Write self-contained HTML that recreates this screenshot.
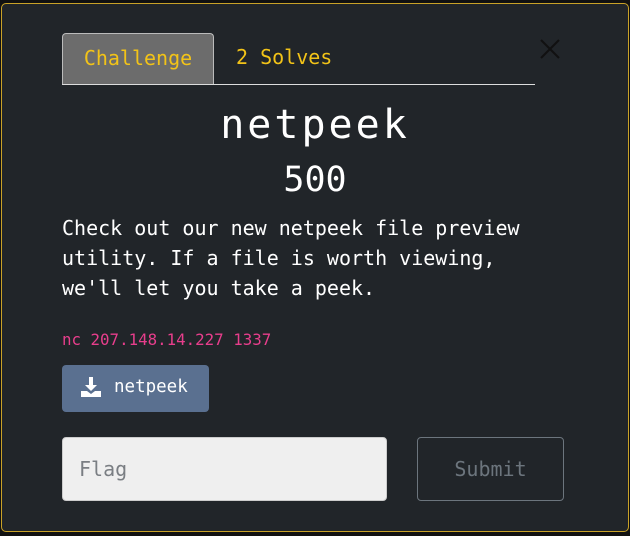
<!DOCTYPE html>
<html><head><style>
*{box-sizing:border-box;margin:0;padding:0}
body{width:630px;height:536px;background:#111;position:relative;overflow:hidden;font-family:"DejaVu Sans Mono","Liberation Mono",monospace}
.m{position:absolute;left:1px;top:3px;width:628px;height:529px;background:#212529;border:1px solid #c9a227;border-radius:5px}
.tab{position:absolute;left:62px;top:33px;width:152px;height:51px;background:#6c6c6c;border:1px solid #bbb;border-bottom:none;border-radius:4px 4px 0 0;color:#f2c318;font-size:20px;text-align:center;line-height:48px}
.t2{position:absolute;left:236px;top:33px;color:#f2c318;font-size:20px;line-height:48px}
.line{position:absolute;left:62px;top:84px;width:473px;height:1px;background:#ddd}
.x{position:absolute;left:538px;top:37px}
.title{position:absolute;left:0;width:630px;top:102px;text-align:center;color:#fff;font-size:40px;letter-spacing:3px}
.pts{position:absolute;left:0;width:630px;top:160px;text-align:center;color:#fff;font-size:35px}
.desc{position:absolute;left:62px;top:213px;color:#fff;font-size:20px;line-height:30px;width:470px}
.nc{position:absolute;left:62px;top:330px;color:#e83e8c;font-size:15.8px}
.btn{position:absolute;left:62px;top:365px;width:147px;height:47px;background:#5a7090;border-radius:4px;color:#fff;font-size:17.5px;line-height:45px;padding-left:52px}
.inp{position:absolute;left:62px;top:437px;width:325px;height:64px;background:#efefef;border:1px solid #ccc;border-radius:4px;color:#7a7e83;font-size:20px;line-height:62px;padding-left:16px}
.sub{position:absolute;left:417px;top:437px;width:147px;height:64px;border:1px solid #6c757d;border-radius:4px;color:#6c757d;font-size:20px;line-height:62px;text-align:center}
</style></head><body>
<div class="m"></div>
<div class="tab">Challenge</div>
<div class="t2">2 Solves</div>
<div class="line"></div>
<svg class="x" width="24" height="24" viewBox="0 0 24 24"><path d="M3 3L21 21M21 3L3 21" stroke="#111" stroke-width="2.2"/></svg>
<div class="title">netpeek</div>
<div class="pts">500</div>
<div class="desc">Check out our new netpeek file preview utility. If a file is worth viewing, we'll let you take a peek.</div>
<div class="nc">nc 207.148.14.227 1337</div>
<div class="btn"><svg style="position:absolute;left:19px;top:12px" width="20" height="20" viewBox="0 0 20 20"><path d="M8 0h4v8h4l-6 6-6-6h4z" fill="#fff"/><path d="M0 14h6l4 3 4-3h6v6H0z" fill="#fff"/></svg>netpeek</div>
<div class="inp">Flag</div>
<div class="sub">Submit</div>
</body></html>
